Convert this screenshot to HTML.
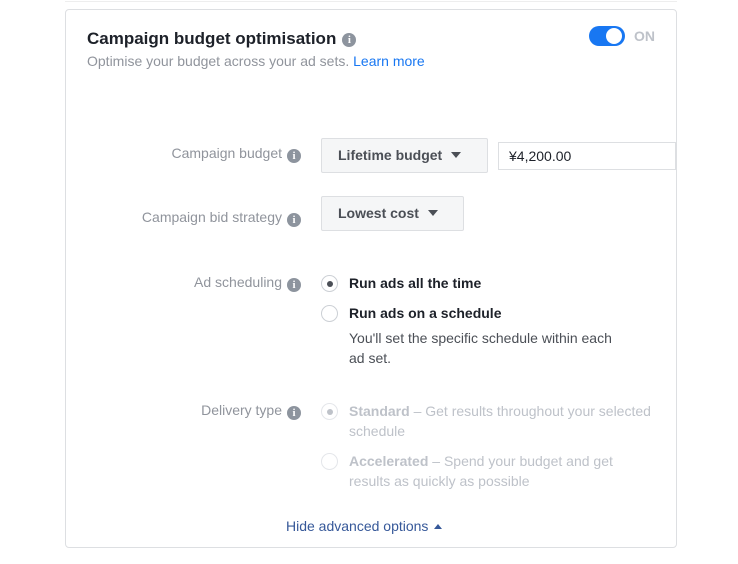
<!DOCTYPE html>
<html><head><style>
body{margin:0;width:738px;height:564px;background:#fff;font-family:"Liberation Sans",Arial,sans-serif;position:relative;overflow:hidden}
.a{position:absolute;white-space:nowrap}
.card{position:absolute;left:65px;top:9px;width:610px;height:537px;border:1px solid #dddfe2;border-radius:4px}
.lbl{font-size:14px;color:#90949c;text-align:right;width:220px}
.i{display:inline-block;width:14px;height:14px;border-radius:50%;background:#8d949e;color:#fff;font-size:11px;font-weight:bold;text-align:center;line-height:14px;vertical-align:-1px;margin-left:5px;font-family:"Liberation Serif",serif}
.btn{position:absolute;background:#f5f6f7;border:1px solid #dddfe2;border-radius:2px;font-size:14px;font-weight:bold;color:#4b4f56;box-sizing:border-box;padding-left:16px;line-height:32px}
.tri{display:inline-block;width:0;height:0;border-left:5px solid transparent;border-right:5px solid transparent;border-top:6px solid #4b4f56;vertical-align:2px;margin-left:9px}
.r{position:absolute;width:17px;height:17px;border:1px solid #ccd0d5;border-radius:50%;box-sizing:border-box;background:#fff}
.r.on::after{content:"";position:absolute;left:4.5px;top:4.5px;width:6px;height:6px;border-radius:50%;background:#4b4f56}
.r.dis{border-color:#e4e6ea}
.r.dis::after{background:#bec2c9}
.t{font-size:14px;color:#1d2129}
</style></head><body>
<div style="position:absolute;left:65px;top:-5px;width:612px;height:6px;border-bottom:1px solid #eee"></div>
<div class="card"></div>
<div class="a" style="left:87px;top:29px;font-size:17px;font-weight:bold;color:#1d2129">Campaign budget optimisation<span class="i" style="vertical-align:1px;margin-left:6px">i</span></div>
<div class="a" style="left:87px;top:53px;font-size:14px;color:#90949c">Optimise your budget across your ad sets. <span style="color:#1877f2">Learn more</span></div>
<div class="a" style="left:589px;top:26px;width:36px;height:20px;border-radius:10px;background:#1877f2"></div>
<div class="a" style="left:606px;top:28px;width:16px;height:16px;border-radius:50%;background:#fff"></div>
<div class="a" style="left:634px;top:28px;font-size:14px;font-weight:bold;color:#bec2c9">ON</div>

<div class="a lbl" style="left:81px;top:145px">Campaign budget<span class="i">i</span></div>
<div class="btn" style="left:321px;top:138px;width:167px;height:35px">Lifetime budget<span class="tri"></span></div>
<div class="a" style="left:498px;top:142px;width:178px;height:28px;border:1px solid #dddfe2;box-sizing:border-box;font-size:14px;color:#1d2129;padding-left:10px;line-height:26px">¥4,200.00</div>

<div class="a lbl" style="left:81px;top:209px">Campaign bid strategy<span class="i">i</span></div>
<div class="btn" style="left:321px;top:196px;width:143px;height:35px">Lowest cost<span class="tri"></span></div>

<div class="a lbl" style="left:81px;top:274px">Ad scheduling<span class="i">i</span></div>
<div class="r on" style="left:321px;top:275px"></div>
<div class="a t" style="left:349px;top:275px;font-weight:bold">Run ads all the time</div>
<div class="r" style="left:321px;top:305px"></div>
<div class="a t" style="left:349px;top:305px;font-weight:bold">Run ads on a schedule</div>
<div class="a t" style="left:349px;top:328px;line-height:20px;color:#4b4f56">You'll set the specific schedule within each<br>ad set.</div>

<div class="a lbl" style="left:81px;top:402px">Delivery type<span class="i">i</span></div>
<div class="r on dis" style="left:321px;top:403px"></div>
<div class="a t" style="left:349px;top:401px;line-height:20px;color:#bec2c9"><b>Standard</b> – Get results throughout your selected<br>schedule</div>
<div class="r dis" style="left:321px;top:453px"></div>
<div class="a t" style="left:349px;top:451px;line-height:20px;color:#bec2c9"><b>Accelerated</b> – Spend your budget and get<br>results as quickly as possible</div>

<div class="a" style="left:286px;top:518px;font-size:14px;color:#365899">Hide advanced options <span style="display:inline-block;width:0;height:0;border-left:4px solid transparent;border-right:4px solid transparent;border-bottom:5px solid #365899;vertical-align:2px;margin-left:2px"></span></div>
</body></html>
